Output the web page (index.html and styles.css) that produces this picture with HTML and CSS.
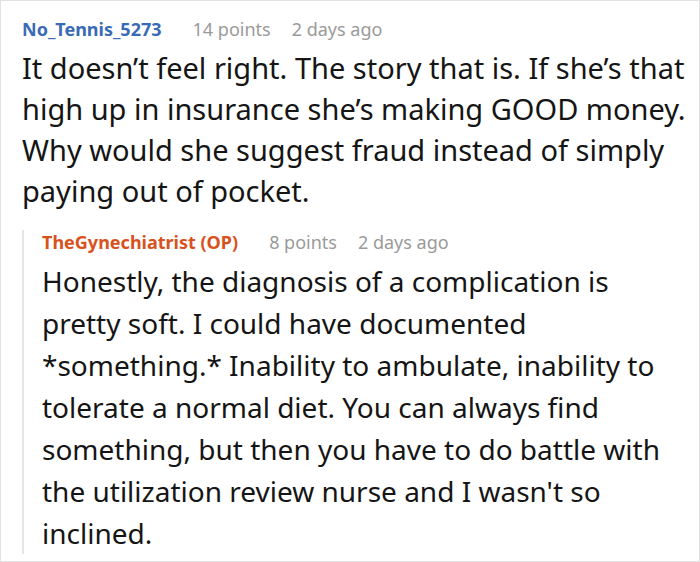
FILE: index.html
```html
<!DOCTYPE html>
<html>
<head>
<meta charset="utf-8">
<link rel="stylesheet" href="styles.css">
</head>
<body>
<div class="thread">
  <div class="comment">
    <div class="meta">
      <span class="author">No_Tennis_5273</span>
      <span class="info">14 points</span>
      <span class="info">2 days ago</span>
    </div>
    <p class="body">It doesn’t feel right. The story that is. If she’s that high up in insurance she’s making GOOD money. Why would she suggest fraud instead of simply paying out of pocket.</p>
    <div class="reply">
      <div class="meta">
        <span class="author op">TheGynechiatrist (OP)</span>
        <span class="info">8 points</span>
        <span class="info">2 days ago</span>
      </div>
      <p class="body">Honestly, the diagnosis of a complication is pretty soft. I could have documented *something.* Inability to ambulate, inability to tolerate a normal diet. You can always find something, but then you have to do battle with the utilization review nurse and I wasn't so inclined.</p>
    </div>
  </div>
</div>
</body>
</html>
```
FILE: styles.css
```css
html, body {
  margin: 0;
  padding: 0;
  background: #fff;
}
.thread {
  box-sizing: border-box;
  width: 700px;
  height: 562px;
  border: 1px solid #e2e2e2;
  padding: 16px 6px 0 21px;
  font-family: "Noto Sans", "Open Sans", sans-serif;
  color: #151515;
  overflow: hidden;
}
.meta {
  display: flex;
  gap: 21px;
  align-items: baseline;
  font-size: 18px;
  line-height: 24px;
}
.author {
  font-weight: 700;
  color: #3a6bb6;
  margin-right: 10px;
}
.author.op {
  color: #d8521d;
}
.info {
  color: #9a9a9a;
}
.body {
  margin: 6px 0 0;
  font-size: 29px;
  line-height: 41px;
}
.reply {
  margin-top: 32px;
  border-left: 2px solid #e6e6e6;
  padding-left: 18px;
}
.reply .meta {
  margin-top: -13px;
}
.reply .body {
  font-size: 28px;
  line-height: 42px;
  margin-bottom: -10px;
}
```
